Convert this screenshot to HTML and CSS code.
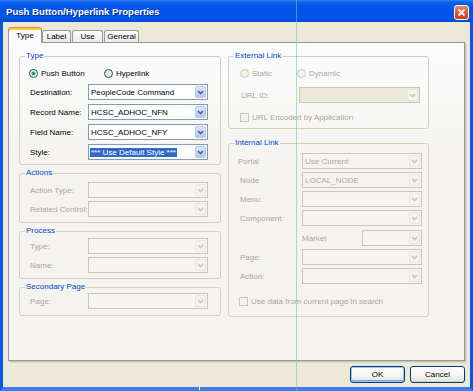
FILE: index.html
```html
<!DOCTYPE html>
<html lang="en">
<head>
    <meta charset="UTF-8">
    <meta name="viewport" content="width=device-width, initial-scale=1.0">
    <title>Push Button/Hyperlink Properties</title>
    <link rel="stylesheet" href="styles.css">
</head>
<body>
    <div class="window">
        <div class="titlebar">
            <span class="title">Push Button/Hyperlink Properties</span>
            <span class="close">
                <svg viewBox="0 0 13 13" width="13" height="13"><path d="M3.5 3.5l6 6M9.5 3.5l-6 6"/></svg>
            </span>
        </div>

        <div class="frame">
            <!-- Tab strip -->
            <div class="tabs">
                <div class="tab active">Type</div>
                <div class="tab tab-label">Label</div>
                <div class="tab tab-use">Use</div>
                <div class="tab tab-general">General</div>
            </div>

            <div class="panel">
                <!-- Left column -->
                <div class="col">
                    <fieldset class="group type-group">
                        <legend>Type</legend>
                        <div class="fields">
                            <div class="options">
                                <span class="opt opt-push"><span class="radio checked"></span>Push Button</span>
                                <span class="opt"><span class="radio"></span>Hyperlink</span>
                            </div>
                            <div class="row">
                                <span>Destination:</span>
                                <div class="combo"><span class="combo-text">PeopleCode Command</span><span class="combo-btn"><svg class="chev" viewBox="0 0 7 5" width="7" height="5"><path d="M1 1l2.5 2.5L6 1"/></svg></span></div>
                            </div>
                            <div class="row">
                                <span>Record Name:</span>
                                <div class="combo"><span class="combo-text">HCSC_ADHOC_NFN</span><span class="combo-btn"><svg class="chev" viewBox="0 0 7 5" width="7" height="5"><path d="M1 1l2.5 2.5L6 1"/></svg></span></div>
                            </div>
                            <div class="row">
                                <span>Field Name:</span>
                                <div class="combo"><span class="combo-text">HCSC_ADHOC_NFY</span><span class="combo-btn"><svg class="chev" viewBox="0 0 7 5" width="7" height="5"><path d="M1 1l2.5 2.5L6 1"/></svg></span></div>
                            </div>
                            <div class="row">
                                <span>Style:</span>
                                <div class="combo"><span class="combo-text"><span class="selected">*** Use Default Style ***</span></span><span class="combo-btn"><svg class="chev" viewBox="0 0 7 5" width="7" height="5"><path d="M1 1l2.5 2.5L6 1"/></svg></span></div>
                            </div>
                        </div>
                    </fieldset>

                    <fieldset class="group disabled actions-group">
                        <legend>Actions</legend>
                        <div class="fields">
                            <div class="row">
                                <span>Action Type:</span>
                                <div class="combo"><span class="combo-text"></span><span class="combo-btn"><svg class="chev" viewBox="0 0 7 5" width="7" height="5"><path d="M1 1l2.5 2.5L6 1"/></svg></span></div>
                            </div>
                            <div class="row">
                                <span>Related Control:</span>
                                <div class="combo"><span class="combo-text"></span><span class="combo-btn"><svg class="chev" viewBox="0 0 7 5" width="7" height="5"><path d="M1 1l2.5 2.5L6 1"/></svg></span></div>
                            </div>
                        </div>
                    </fieldset>

                    <fieldset class="group disabled process-group">
                        <legend>Process</legend>
                        <div class="fields">
                            <div class="row">
                                <span>Type:</span>
                                <div class="combo"><span class="combo-text"></span><span class="combo-btn"><svg class="chev" viewBox="0 0 7 5" width="7" height="5"><path d="M1 1l2.5 2.5L6 1"/></svg></span></div>
                            </div>
                            <div class="row">
                                <span>Name:</span>
                                <div class="combo"><span class="combo-text"></span><span class="combo-btn"><svg class="chev" viewBox="0 0 7 5" width="7" height="5"><path d="M1 1l2.5 2.5L6 1"/></svg></span></div>
                            </div>
                        </div>
                    </fieldset>

                    <fieldset class="group disabled secondary-group">
                        <legend>Secondary Page</legend>
                        <div class="fields">
                            <div class="row">
                                <span>Page:</span>
                                <div class="combo"><span class="combo-text"></span><span class="combo-btn"><svg class="chev" viewBox="0 0 7 5" width="7" height="5"><path d="M1 1l2.5 2.5L6 1"/></svg></span></div>
                            </div>
                        </div>
                    </fieldset>
                </div>

                <!-- Right column -->
                <div class="col">
                    <fieldset class="group disabled external-group">
                        <legend>External Link</legend>
                        <div class="fields">
                            <div class="options">
                                <span class="opt opt-static"><span class="radio"></span>Static</span>
                                <span class="opt"><span class="radio"></span>Dynamic</span>
                            </div>
                            <div class="row url-row">
                                <span>URL ID:</span>
                                <div class="combo dim"><span class="combo-text"></span><span class="combo-btn"><svg class="chev" viewBox="0 0 7 5" width="7" height="5"><path d="M1 1l2.5 2.5L6 1"/></svg></span></div>
                            </div>
                            <div class="check-row">
                                <span class="checkbox"></span>URL Encoded by Application
                            </div>
                        </div>
                    </fieldset>

                    <fieldset class="group disabled internal-group">
                        <legend>Internal Link</legend>
                        <div class="fields">
                            <div class="row">
                                <span class="portal-label">Portal</span>
                                <div class="combo"><span class="combo-text">Use Current</span><span class="combo-btn"><svg class="chev" viewBox="0 0 7 5" width="7" height="5"><path d="M1 1l2.5 2.5L6 1"/></svg></span></div>
                            </div>
                            <div class="row">
                                <span>Node</span>
                                <div class="combo"><span class="combo-text">LOCAL_NODE</span><span class="combo-btn"><svg class="chev" viewBox="0 0 7 5" width="7" height="5"><path d="M1 1l2.5 2.5L6 1"/></svg></span></div>
                            </div>
                            <div class="row">
                                <span>Menu:</span>
                                <div class="combo"><span class="combo-text"></span><span class="combo-btn"><svg class="chev" viewBox="0 0 7 5" width="7" height="5"><path d="M1 1l2.5 2.5L6 1"/></svg></span></div>
                            </div>
                            <div class="row">
                                <span>Component:</span>
                                <div class="combo"><span class="combo-text"></span><span class="combo-btn"><svg class="chev" viewBox="0 0 7 5" width="7" height="5"><path d="M1 1l2.5 2.5L6 1"/></svg></span></div>
                            </div>
                            <div class="row market-row">
                                <span></span>
                                <div class="market">
                                    <span>Market</span>
                                    <div class="combo"><span class="combo-text"></span><span class="combo-btn"><svg class="chev" viewBox="0 0 7 5" width="7" height="5"><path d="M1 1l2.5 2.5L6 1"/></svg></span></div>
                                </div>
                            </div>
                            <div class="row">
                                <span>Page:</span>
                                <div class="combo"><span class="combo-text"></span><span class="combo-btn"><svg class="chev" viewBox="0 0 7 5" width="7" height="5"><path d="M1 1l2.5 2.5L6 1"/></svg></span></div>
                            </div>
                            <div class="row">
                                <span>Action:</span>
                                <div class="combo"><span class="combo-text"></span><span class="combo-btn"><svg class="chev" viewBox="0 0 7 5" width="7" height="5"><path d="M1 1l2.5 2.5L6 1"/></svg></span></div>
                            </div>
                            <div class="check-row search-row">
                                <span class="checkbox"></span>Use data from current page in search
                            </div>
                        </div>
                    </fieldset>
                </div>
            </div>

            <div class="buttons">
                <button class="btn default">OK</button>
                <button class="btn">Cancel</button>
            </div>
        </div>

        <!-- guide line drawn over the whole window -->
        <div class="guide"></div>
        <div class="tick"></div>
    </div>
</body>
</html>
```

FILE: styles.css
```css
body {
    margin: 0;
    font-family: "Liberation Sans", Arial, sans-serif;
    font-size: 8px;
    color: #000;
}

.window {
    position: relative;
    width: 473px;
    height: 391px;
    display: flex;
    flex-direction: column;
    overflow: hidden;
}

/* Title bar */
.titlebar {
    flex: none;
    height: 22px;
    display: flex;
    align-items: center;
    justify-content: space-between;
    padding: 0 4px 0 6px;
    background: linear-gradient(to bottom, #2F82F5 0%, #0A5EEB 12%, #0054E6 45%, #0058EE 80%, #0049D2 100%);
}

.title {
    color: #fff;
    font-weight: bold;
    font-size: 9.6px;
    text-shadow: 1px 1px 0 #0A2A8C;
}

.close {
    width: 15px;
    height: 15px;
    margin-top: 3px;
    box-sizing: border-box;
    border: 1px solid #fff;
    border-radius: 3px;
    background: linear-gradient(to bottom, #EE8A6C, #D9542E 55%, #C7411C);
    display: flex;
    align-items: center;
    justify-content: center;
}

.close path {
    stroke: #fff;
    stroke-width: 1.8;
    fill: none;
}

/* Window body */
.frame {
    flex: 1;
    display: flex;
    flex-direction: column;
    background: #ECE9D8;
    border: 0 solid #0A55E6;
    border-width: 0 3px 4px 3px;
    border-bottom-color: #3F7DEE;
    padding: 5px 5px 0 5px;
}

/* Tabs */
.tabs {
    height: 15px;
    display: flex;
    align-items: flex-end;
}

.tab {
    height: 12px;
    box-sizing: border-box;
    border: 1px solid #919B9C;
    border-bottom: none;
    border-radius: 3px 3px 0 0;
    background: linear-gradient(to bottom, #FFFFFF, #ECEBE6);
    line-height: 11px;
    text-align: center;
}

.tab.active {
    position: relative;
    z-index: 1;
    width: 34px;
    height: 16px;
    margin-bottom: -1px;
    background: #FCFCFE;
    border-top: 1px solid #E68B2C;
    box-shadow: inset 0 2px 0 #FFC73C;
    line-height: 15px;
}

.tab-label { width: 29px; margin-left: 0; }
.tab-use { width: 31px; margin-left: 1px; }
.tab-general { width: 35px; margin-left: 1px; }

/* Tab page */
.panel {
    height: 319px;
    box-sizing: border-box;
    border: 1px solid #919B9C;
    background: linear-gradient(to bottom, #FCFCFE, #F4F3EE 40%);
    box-shadow: 1px 1px 0 #C8C5B5, 2px 2px 0 #DDDACB;
    padding: 8px 0 0 10px;
    display: grid;
    grid-template-columns: 202px 201px;
    column-gap: 7px;
    align-items: start;
}

.col {
    display: flex;
    flex-direction: column;
}

/* Group boxes */
.group {
    margin: 0;
    padding: 0;
    min-width: 0;
    border: 1px solid #D0D0BF;
    border-radius: 3px;
}

.group legend {
    color: #0046D5;
    font-size: 8px;
    line-height: 10px;
    padding: 0 1px;
    margin-left: 5px;
}

.group.disabled {
    color: #ACA899;
}

.fields {
    display: flex;
    flex-direction: column;
    padding: 0 10px;
}

.row {
    height: 16px;
    display: grid;
    grid-template-columns: 58px 120px;
    align-items: center;
    white-space: nowrap;
}

.type-group .fields { padding: 6px 10px 4px; gap: 4px; }
.options {
    height: 12px;
    display: flex;
    align-items: center;
    margin: 0 0 1px -1px;
}
.opt {
    display: flex;
    align-items: center;
    gap: 3px;
}
.opt-push { width: 75px; }
.opt-static { width: 57px; }

.actions-group { margin-top: 3px; }
.actions-group .fields { padding: 4px 10px 5px; gap: 3px; }

.process-group { margin-top: 3px; }
.process-group .fields { padding: 2px 10px 5px; gap: 3px; }

.secondary-group { margin-top: 3px; }
.secondary-group .fields { padding: 1px 10px 6px; }

.external-group .fields { padding: 6px 7px 5px 12px; }
.external-group .row { grid-template-columns: 58px 121px; }
.url-row { margin-top: 7px; }
.external-group .check-row { margin-top: 8px; }

.internal-group { margin-top: 9px; }
.internal-group .fields { padding: 5px 6px 9px 11px; gap: 3px; }
.internal-group .row { grid-template-columns: 62px 120px; }
.portal-label { margin-left: -2px; }
.market-row { margin-top: 1px; }
.market {
    display: grid;
    grid-template-columns: 60px 60px;
    align-items: center;
}
.search-row { margin-top: 8px; }

/* Combo boxes */
.combo {
    height: 16px;
    box-sizing: border-box;
    border: 1px solid #7F9DB9;
    background: #fff;
    display: flex;
    align-items: center;
    color: #000;
}

.combo-text {
    flex: 1;
    padding-left: 2px;
    overflow: hidden;
    white-space: nowrap;
}

.combo-text .selected {
    background: #316AC5;
    color: #fff;
    margin-left: -1px;
    padding: 1px 1px 2px;
}

.combo-btn {
    width: 11px;
    height: 12px;
    margin-right: 1px;
    box-sizing: border-box;
    border: 1px solid #B5C8F4;
    border-radius: 2px;
    background: linear-gradient(to bottom, #DCE6FD, #C1D3FB 60%, #B2C7F7);
    color: #4D6185;
    display: flex;
    align-items: center;
    justify-content: center;
}

.chev path {
    fill: none;
    stroke: currentColor;
    stroke-width: 1.6;
}

.disabled .combo {
    border-color: #C9C7BA;
    background: #F5F4EF;
    color: #ACA899;
}

.disabled .combo.dim {
    background: #ECE9D8;
}

.disabled .combo-btn {
    border-color: #E8E6DD;
    background: #F4F3EE;
    color: #C9C7BA;
}

/* Radios and checkboxes */
.radio {
    width: 9px;
    height: 9px;
    box-sizing: border-box;
    border: 1px solid #1C5180;
    border-radius: 50%;
    background: linear-gradient(135deg, #DCD9CD, #FFFFFF);
    display: flex;
    align-items: center;
    justify-content: center;
}

.radio.checked::after {
    content: "";
    width: 3px;
    height: 3px;
    border-radius: 50%;
    background: #21A121;
    box-shadow: 0 0 0 0.5px #55C155;
}

.disabled .radio {
    border-color: #CAC8BB;
    background: #F4F3EE;
}

.check-row {
    height: 12px;
    display: flex;
    align-items: center;
    gap: 3px;
    margin-left: -1px;
    white-space: nowrap;
}

.checkbox {
    width: 9px;
    height: 9px;
    box-sizing: border-box;
    border: 1px solid #CAC8BB;
    background: #F4F3EE;
}

/* Dialog buttons */
.buttons {
    margin-top: 5px;
    display: flex;
    justify-content: flex-end;
    gap: 5px;
}

.btn {
    width: 55px;
    height: 17px;
    box-sizing: border-box;
    border: 1px solid #003C74;
    border-radius: 3px;
    background: linear-gradient(to bottom, #FFFFFF, #F3F3EF 60%, #E3E1D8);
    box-shadow: inset 0 -1px 0 #D6D0C5;
    font-family: "Liberation Sans", Arial, sans-serif;
    font-size: 8px;
    color: #000;
    padding: 0;
}

.btn.default {
    box-shadow: inset 0 0 0 1px #A9C4EE, inset 0 -1px 0 1px #7DA2E0;
}

/* Overlays */
.guide {
    position: absolute;
    left: 296px;
    top: 0;
    width: 1px;
    height: 391px;
    background: rgba(110, 200, 190, 0.6);
}

.tick {
    position: absolute;
    left: 199px;
    top: 385px;
    width: 1px;
    height: 5px;
    background: #fff;
}
```
